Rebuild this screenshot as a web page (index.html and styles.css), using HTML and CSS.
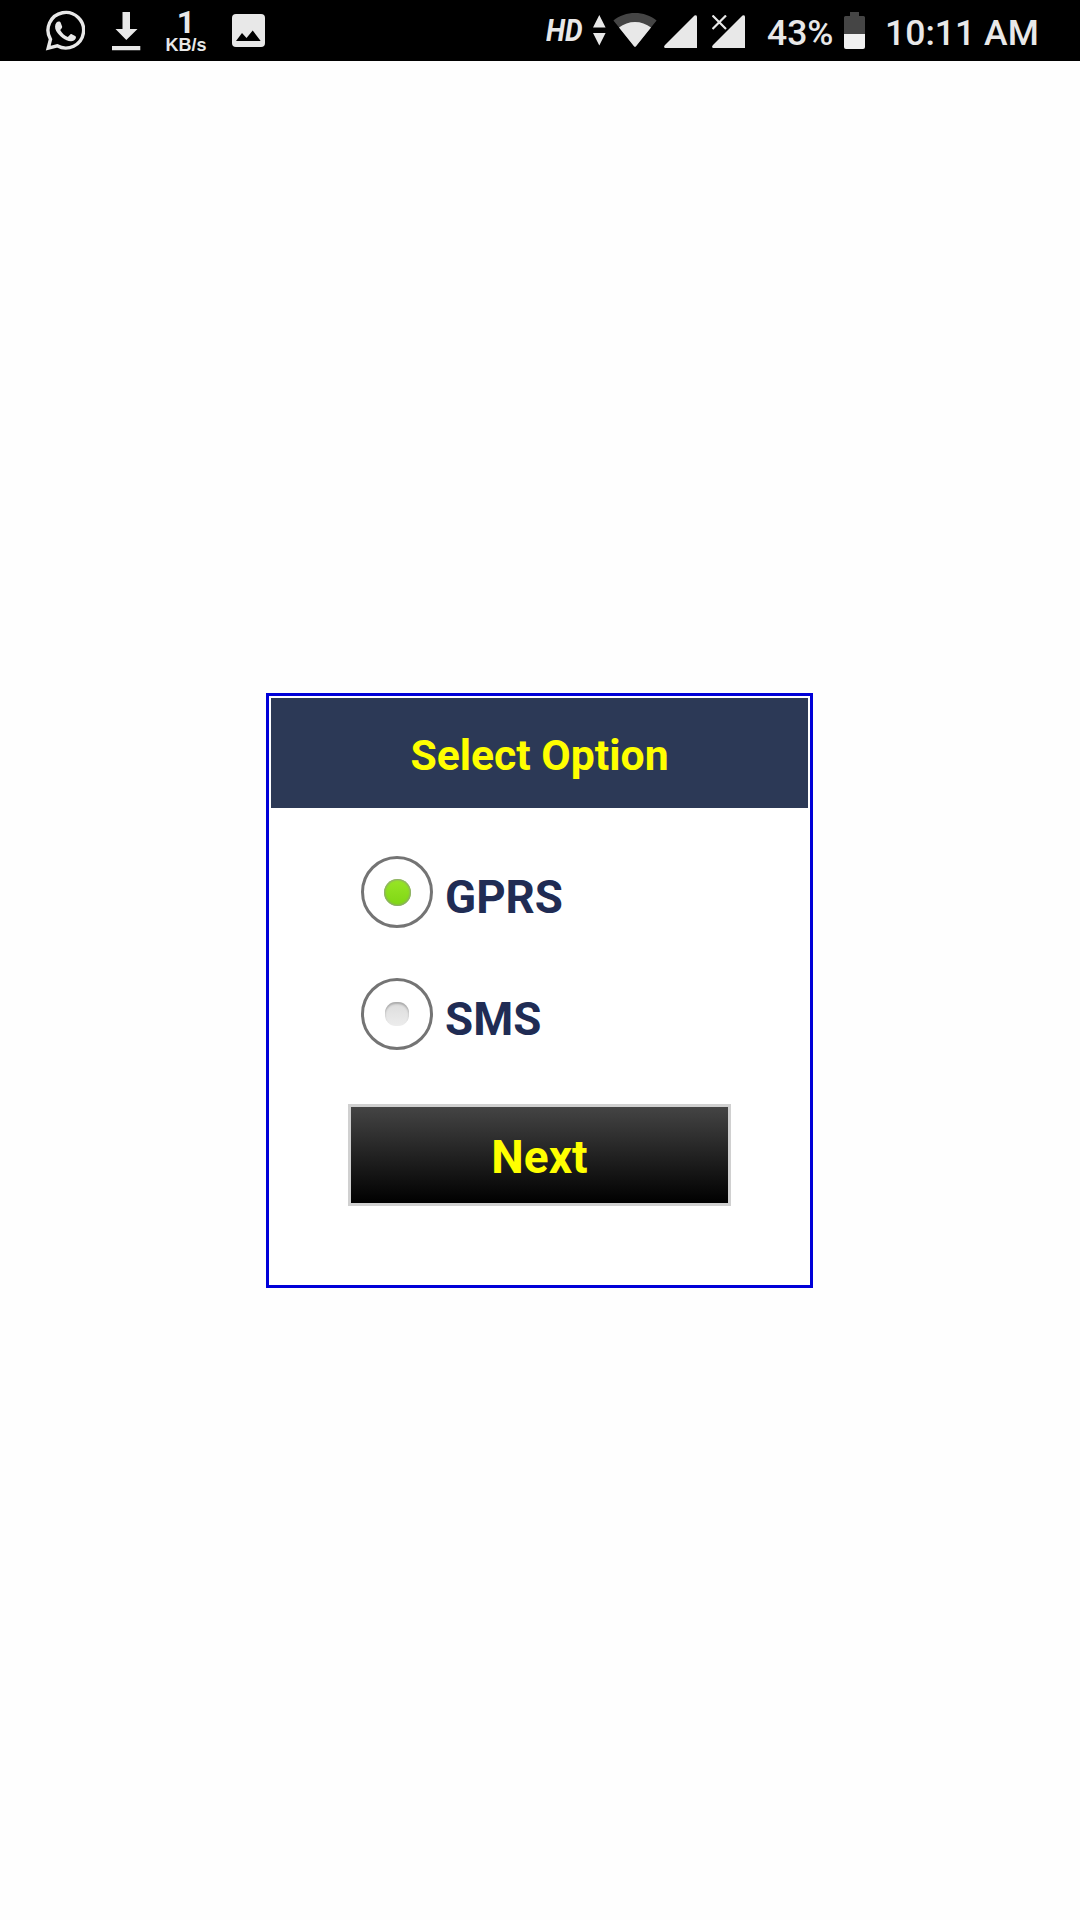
FILE: index.html
```html
<!DOCTYPE html>
<html lang="en">

<head>
    <meta charset="UTF-8">
    <meta name="viewport" content="width=device-width, initial-scale=1.0">
    <title>Select Option</title>
    <link rel="stylesheet" href="styles.css">
</head>

<body>
    <div class="status">
        <svg class="chat" width="40" height="42" viewBox="0 0 40 42">
            <path d="M3.2 38.2 L5.5 29.3 A17.8 17.8 0 1 1 12.2 35.8 Z" fill="none" stroke="#e8e8e8" stroke-width="3.4" stroke-linejoin="miter" />
            <path d="M11.5 12.6 C12.3 11.6 13.4 11.4 14.5 11.6 C15.2 11.8 15.5 12.3 15.8 13.1 L17.1 16.4 C17.4 17.2 17.1 17.8 15.2 20 C17.2 23.5 19.3 25.4 22.8 27 L25.3 24.4 C25.8 24 26.3 24 26.8 24.3 L30.2 26.1 C31.1 26.6 31.1 27.2 30.8 28.3 C30.2 30.4 27.8 31.4 25.8 31.3 C20.2 31 14.4 26.3 11.2 21 C9.6 18.2 9.7 14.7 11.5 12.6 Z" fill="#e8e8e8" />
        </svg>
        <svg class="download" width="29" height="39" viewBox="0 0 29 39">
            <path d="M10.5 0 H18 V17 H25.5 L14.3 28 L3.5 17 H10.5 Z M0 34 H28.3 V38.3 H0 Z" fill="#e8e8e8" />
        </svg>
        <div class="speed">
            <span class="rate">1</span>
            <span class="unit">KB/s</span>
        </div>
        <svg class="photo" width="33" height="33" viewBox="0 0 33 33">
            <rect width="33" height="33" rx="4" fill="#e8e8e8" />
            <path d="M4 27 L10 19 L14.5 24 L20.7 16.5 L28.7 27 Z" fill="#000" />
        </svg>
        <span class="hd">HD</span>
        <svg class="data" width="13" height="31" viewBox="0 0 13 31">
            <path d="M6.3 0 L12.6 12.5 H0 Z M0 18 H12.6 L6.3 30.5 Z" fill="#e8e8e8" />
        </svg>
        <svg class="wifi" width="44" height="35" viewBox="0 0 44 35">
            <path d="M0.4 7.5 C12 -2.5 32 -2.5 43.6 7.5 L23 33 Q22 34.5 21 33 Z" fill="#454545" />
            <path d="M6 14.5 C15 7 29 7 38 14.5 L23 33.2 Q22 34.5 21 33.2 Z" fill="#e8e8e8" />
        </svg>
        <svg class="signal" width="34" height="33" viewBox="0 0 34 33">
            <path d="M1 30 L30.5 0.6 Q33 -0.8 33 2 V33 H1 Q-0.8 32 1 30 Z" fill="#e8e8e8" />
        </svg>
        <svg class="signal-off" width="34" height="33" viewBox="0 0 34 33">
            <path d="M1 30 L30.5 0.6 Q33 -0.8 33 2 V33 H1 Q-0.8 32 1 30 Z" fill="#e8e8e8" />
            <path d="M0.5 0.5 L14 14 M14 0.5 L0.5 14" stroke="#e8e8e8" stroke-width="2.2" />
        </svg>
        <span class="percent">43%</span>
        <svg class="battery" width="21" height="37" viewBox="0 0 21 37">
            <path d="M6 0 H15 V4 H19.5 Q21 4 21 5.5 V22 H0 V5.5 Q0 4 1.5 4 H6 Z" fill="#454545" />
            <path d="M0 22 H21 V35 Q21 37 19 37 H2 Q0 37 0 35 Z" fill="#f0f0f0" />
        </svg>
        <span class="clock">10:11 AM</span>
    </div>

    <form class="box">
        <h1 class="title">Select Option</h1>
        <label class="option">
            <input type="radio" name="mode" value="gprs" checked>
            <span>GPRS</span>
        </label>
        <label class="option">
            <input type="radio" name="mode" value="sms">
            <span>SMS</span>
        </label>
        <button type="button" class="next">Next</button>
    </form>
</body>

</html>
```
FILE: styles.css
```css
* {
    box-sizing: border-box;
}

body {
    margin: 0;
    height: 1920px;
    overflow: hidden;
    background: #fefefe;
    font-family: Roboto, sans-serif;
}

/* phone status bar */
.status {
    display: flex;
    align-items: flex-start;
    height: 61px;
    padding-left: 45px;
    background: #000;
    color: #e8e8e8;
    white-space: nowrap;
}

.status svg {
    flex: none;
    display: block;
}

.chat {
    margin-top: 10px;
}

.download {
    margin: 12px 0 0 27px;
}

.speed {
    display: flex;
    flex-direction: column;
    align-items: center;
    width: 44px;
    margin: 6px 0 0 23px;
    font-weight: bold;
}

.rate {
    font-size: 32px;
    line-height: 32px;
}

.unit {
    font-family: "Liberation Sans", sans-serif;
    font-size: 18px;
    line-height: 15px;
}

.photo {
    margin: 14px 0 0 24px;
}

.hd {
    width: 40px;
    margin: 12px 0 0 281px;
    font-size: 31px;
    font-style: italic;
    font-weight: bold;
    line-height: 38px;
    transform: scaleX(0.9);
    transform-origin: left;
}

.data {
    margin: 15px 0 0 7px;
}

.wifi {
    margin: 13px 0 0 7px;
}

.signal {
    margin: 15px 0 0 7px;
}

.signal-off {
    margin: 15px 0 0 14px;
}

.percent {
    width: 66px;
    margin: 12px 0 0 21px;
    font-size: 35.5px;
    font-weight: 500;
    line-height: 42px;
}

.battery {
    margin: 12px 0 0 11px;
}

.clock {
    margin: 12px 0 0 20px;
    font-size: 35.6px;
    font-weight: 500;
    line-height: 42px;
}

/* option box */
.box {
    width: 547px;
    height: 595px;
    margin: 632px 0 0 266px;
    padding: 2px;
    border: 3px solid #0000d8;
    background: #fff;
}

.title {
    height: 110px;
    margin: 0 0 23px;
    background: #2c3956;
    color: #ffff00;
    font-size: 42.7px;
    font-weight: bold;
    line-height: 115px;
    text-align: center;
}

.option {
    display: flex;
    align-items: center;
    height: 122px;
    padding-left: 90px;
    color: #202c54;
    font-size: 45.7px;
    font-weight: bold;
}

.option span {
    padding-top: 11px;
}

.option input {
    appearance: none;
    display: flex;
    align-items: center;
    justify-content: center;
    width: 72px;
    height: 72px;
    margin: 0 12px 0 0;
    border: 3px solid #747474;
    border-radius: 50%;
    background: #fff;
}

.option input::before {
    content: "";
    width: 24px;
    height: 24px;
    border-radius: 11px;
    background: linear-gradient(#dcdcdc, #ececec);
    box-shadow: inset 0 2px 2px #aaa;
}

.option input:checked::before {
    width: 27px;
    height: 27px;
    border-radius: 50%;
    background: linear-gradient(#98e626, #7fd614);
    box-shadow: inset 0 0 2px 1px #8f9f80;
}

.next {
    display: block;
    width: 383px;
    height: 102px;
    margin: 29px 0 0 77px;
    padding: 4px 0 0;
    border: 3px solid #d0d0d0;
    background: linear-gradient(#444, #000);
    color: #ffff00;
    font-family: inherit;
    font-size: 46px;
    font-weight: bold;
}
```
